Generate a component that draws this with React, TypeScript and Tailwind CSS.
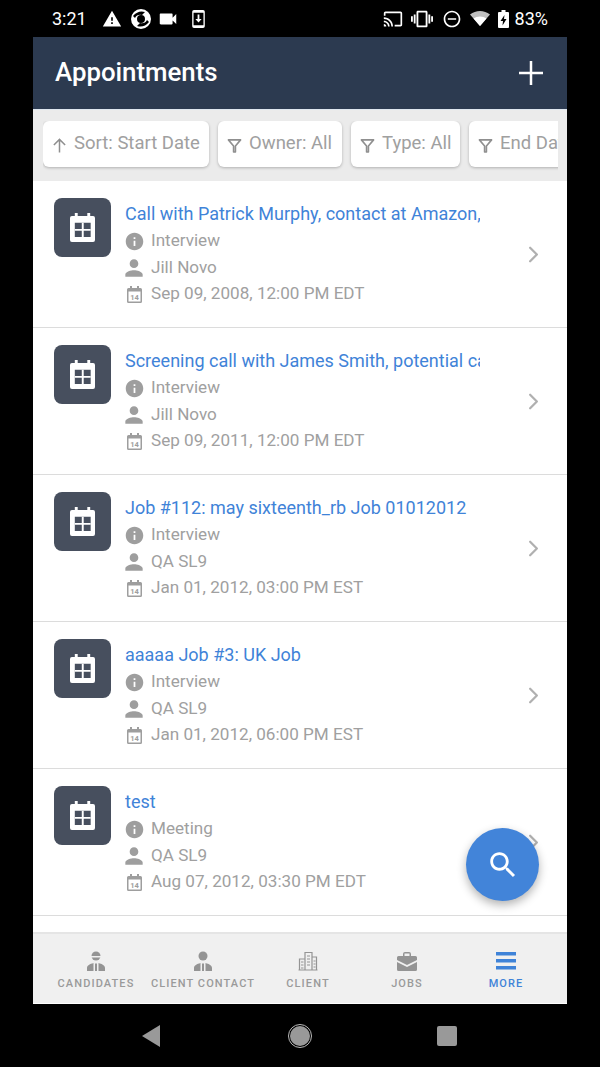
import { ChevronRight } from "lucide-react";
import type { ReactNode } from "react";

const appointments = [
  { title: "Call with Patrick Murphy, contact at Amazon, regarding new role", type: "Interview", owner: "Jill Novo", date: "Sep 09, 2008, 12:00 PM EDT" },
  { title: "Screening call with James Smith, potential candidate", type: "Interview", owner: "Jill Novo", date: "Sep 09, 2011, 12:00 PM EDT" },
  { title: "Job #112: may sixteenth_rb Job 01012012", type: "Interview", owner: "QA SL9", date: "Jan 01, 2012, 03:00 PM EST" },
  { title: "aaaaa Job #3: UK Job", type: "Interview", owner: "QA SL9", date: "Jan 01, 2012, 06:00 PM EST" },
  { title: "test", type: "Meeting", owner: "QA SL9", date: "Aug 07, 2012, 03:30 PM EDT" },
];

function Mi({ d, className }: { d: string; className: string }) {
  return (
    <svg viewBox="0 0 24 24" fill="currentColor" className={className}>
      <path d={d} />
    </svg>
  );
}

const paths = {
  warning: "M1 21h22L12 2 1 21zm12-3h-2v-2h2v2zm0-4h-2v-4h2v4z",
  video: "M17 10.5V7c0-.55-.45-1-1-1H4c-.55 0-1 .45-1 1v10c0 .55.45 1 1 1h12c.55 0 1-.45 1-1v-3.5l4 4v-11l-4 4z",
  cast: "M21 3H3c-1.1 0-2 .9-2 2v3h2V5h18v14h-7v2h7c1.1 0 2-.9 2-2V5c0-1.1-.9-2-2-2zM1 18v3h3c0-1.66-1.34-3-3-3zm0-4v2c2.76 0 5 2.24 5 5h2c0-3.87-3.13-7-7-7zm0-4v2c4.97 0 9 4.03 9 9h2c0-6.08-4.93-11-11-11z",
  vibrate: "M0 15h2V9H0v6zm3 2h2V7H3v10zm19-8v6h2V9h-2zm-3 8h2V7h-2v10zM16.5 3h-9C6.67 3 6 3.67 6 4.5v15c0 .83.67 1.5 1.5 1.5h9c.83 0 1.5-.67 1.5-1.5v-15c0-.83-.67-1.5-1.5-1.5zM16 19H8V5h8v14z",
  dnd: "M12 2C6.48 2 2 6.48 2 12s4.48 10 10 10 10-4.48 10-10S17.52 2 12 2zm0 18c-4.42 0-8-3.58-8-8s3.58-8 8-8 8 3.58 8 8-3.58 8-8 8zM7 11h10v2H7z",
  info: "M12 2C6.48 2 2 6.48 2 12s4.48 10 10 10 10-4.48 10-10S17.52 2 12 2zm1 15h-2v-6h2v6zm0-8h-2V7h2v2z",
  person: "M12 12c2.21 0 4-1.79 4-4s-1.79-4-4-4-4 1.79-4 4 1.79 4 4 4zm0 2c-2.67 0-8 1.34-8 4v2h16v-2c0-2.66-5.33-4-8-4z",
  search: "M15.5 14h-.79l-.28-.27C15.41 12.59 16 11.11 16 9.5 16 5.91 13.09 3 9.5 3S3 5.91 3 9.5 5.91 16 9.5 16c1.61 0 3.09-.59 4.23-1.57l.27.28v.79l5 4.99L20.49 19l-4.99-5zm-6 0C7.01 14 5 11.99 5 9.5S7.01 5 9.5 5 14 7.01 14 9.5 11.99 14 9.5 14z",
};

function SyncLogo() {
  return (
    <svg viewBox="0 0 20 20" className="h-5 w-5 text-white" fill="currentColor">
      <path fillRule="evenodd" d="M10 0a10 10 0 1 0 0 20 10 10 0 0 0 0-20zM10 6a4 4 0 1 1 0 8 4 4 0 0 1 0-8z" />
      <path d="M2 7 Q7 1 14 3 L11 6 Q6 5 4 9zM18 13 Q13 19 6 17 L9 14 Q14 15 16 11z" fill="#000" />
    </svg>
  );
}

function PhoneDownload() {
  return (
    <svg viewBox="0 0 14 20" className="h-[18px] w-[13px] text-white" fill="currentColor">
      <path fillRule="evenodd" d="M2 0h10a2 2 0 0 1 2 2v16a2 2 0 0 1-2 2H2a2 2 0 0 1-2-2V2a2 2 0 0 1 2-2zM1.500 3v14h11V3z" />
      <path d="M6 5h2v5h2.500L7 14 3.500 10H6z" />
    </svg>
  );
}

function Wifi() {
  return (
    <svg viewBox="0 0 20 15" className="h-[15px] w-5 text-white" fill="currentColor">
      <path d="M10 15 L0 3.500 C3 1.200 6.300 0 10 0 s7 1.200 10 3.500z" opacity="0.75" />
      <path d="M10 15 L3.500 7.500 C5.300 6.200 7.500 5.500 10 5.500 s4.700 .7 6.500 2z" />
    </svg>
  );
}

function Battery() {
  return (
    <svg viewBox="0 0 11 18" className="h-[18px] w-[11px] text-white" fill="currentColor">
      <path fillRule="evenodd" d="M3.500 0h4v2H10a1 1 0 0 1 1 1v14a1 1 0 0 1-1 1H1a1 1 0 0 1-1-1V3a1 1 0 0 1 1-1h2.500zM6.500 5 L2.500 11 H5 L4.500 15.500 L8.500 9 H6z" />
    </svg>
  );
}

function StatusBar() {
  return (
    <div className="flex h-[37px] items-center justify-between pl-[52px] pr-[52px] text-white">
      <div className="flex items-center">
        <span className="text-[18px] leading-none">3:21</span>
        <Mi d={paths.warning} className="ml-[15px] h-5 w-5" />
        <span className="ml-[9px]"><SyncLogo /></span>
        <Mi d={paths.video} className="ml-[6px] h-[22px] w-[22px]" />
        <span className="ml-[13px]"><PhoneDownload /></span>
      </div>
      <div className="flex items-center">
        <Mi d={paths.cast} className="h-[20px] w-[20px]" />
        <Mi d={paths.vibrate} className="ml-[8px] h-[22px] w-[22px]" />
        <Mi d={paths.dnd} className="ml-[9px] h-[20px] w-[20px]" />
        <span className="ml-[8px]"><Wifi /></span>
        <span className="ml-[8px]"><Battery /></span>
        <span className="ml-[6px] text-[18px] leading-none">83%</span>
      </div>
    </div>
  );
}

function FilterIcon() {
  return (
    <svg viewBox="0 0 16 16" className="mt-[2px] h-[15px] w-[15px] shrink-0 text-[#8f8f8f]" fill="none" stroke="currentColor" strokeWidth="1.700">
      <path d="M1.500 2h13L9 8.500V15H7V8.500z" strokeLinejoin="round" />
    </svg>
  );
}

function Chip({ width, icon, children }: { width: string; icon: ReactNode; children: ReactNode }) {
  return (
    <div className={`flex h-[46px] shrink-0 items-center gap-[7px] overflow-hidden rounded-md bg-white pl-[9px] text-[18.500px] whitespace-nowrap text-[#a0a0a0] shadow-[0_1px_3px_rgba(0,0,0,0.25)] ${width}`}>
      {icon}
      {children}
    </div>
  );
}

function CalendarTile() {
  return (
    <div className="flex h-[59px] w-[57px] shrink-0 items-center justify-center rounded-lg bg-[#474f5e]">
      <svg viewBox="0 0 26 30" className="h-[29px] w-[25px]">
        <path fill="#fff" fillRule="evenodd" d="M5 0h3v3h10V0h3v3h3a2 2 0 0 1 2 2v23a2 2 0 0 1-2 2H2a2 2 0 0 1-2-2V5a2 2 0 0 1 2-2h3zM5 10v15h16.500V10z" />
        <path fill="#fff" d="M12.250 10h2v15h-2zM5 16.500h16.500v2H5z" />
      </svg>
    </div>
  );
}

function DateIcon() {
  return (
    <svg viewBox="0 0 15 17" className="h-[17px] w-[15px] text-[#9e9e9e]">
      <path fill="currentColor" fillRule="evenodd" d="M3 0h2v2h5V0h2v2h1.500A1.500 1.500 0 0 1 15 3.500v12a1.500 1.500 0 0 1-1.500 1.500h-12A1.500 1.500 0 0 1 0 15.500v-12A1.500 1.500 0 0 1 1.500 2H3zM1.500 5.500v10h12v-10z" />
      <text x="7.500" y="14" textAnchor="middle" fontSize="7.500" fontWeight="700" fill="currentColor">14</text>
    </svg>
  );
}

function Row({ icon, text }: { icon: ReactNode; text: string }) {
  return (
    <div className="flex h-[26.500px] items-center">
      <span className="flex w-[18px] justify-center">{icon}</span>
      <span className="ml-[8px] text-[17.100px] whitespace-nowrap text-[#a0a0a0]">{text}</span>
    </div>
  );
}

function AppointmentRow({ a }: { a: (typeof appointments)[number] }) {
  return (
    <div className="flex h-[147px] shrink-0 border-b border-[#dcdcdc] pl-[21px] pt-[17px]">
      <CalendarTile />
      <div className="ml-[14px] w-[355px] pt-[3px]">
        <div className="h-[27px] overflow-hidden text-[18px] leading-[26px] whitespace-nowrap text-[#3f83d8]">{a.title}</div>
        <Row icon={<Mi d={paths.info} className="h-[21px] w-[21px] max-w-none shrink-0 text-[#9e9e9e]" />} text={a.type} />
        <Row icon={<Mi d={paths.person} className="h-[26px] w-[26px] max-w-none shrink-0 text-[#9e9e9e]" />} text={a.owner} />
        <Row icon={<DateIcon />} text={a.date} />
      </div>
      <div className="ml-[40px] flex h-[113px] items-center">
        <ChevronRight size={27} strokeWidth={2} className="text-[#b0b0b0]" />
      </div>
    </div>
  );
}

function BriefcaseIcon() {
  return (
    <svg viewBox="0 0 20 19" className="h-[19px] w-5" fill="currentColor">
      <path d="M6 4V2a2 2 0 0 1 2-2h4a2 2 0 0 1 2 2v2h4.500A1.500 1.500 0 0 1 20 5.500V8l-10 5L0 8V5.500A1.500 1.500 0 0 1 1.500 4zM7.500 4h5V1.500h-5z" fillRule="evenodd" />
      <path d="M0 10l10 5 10-5v7.500a1.500 1.500 0 0 1-1.500 1.500h-17A1.500 1.500 0 0 1 0 17.500z" />
    </svg>
  );
}

function AgentIcon({ cap }: { cap?: boolean }) {
  return (
    <svg viewBox="0 0 20 20" className="h-5 w-5" fill="currentColor">
      <circle cx="10" cy="5" r="4.500" />
      {cap && <path d="M4 5h12v1.500H4z" fill="#f0f0f0" />}
      <path d="M1 20v-3c0-2.500 3-4 6.500-5v8zM9 12.500h2V20H9zM12.500 12c3.500 1 6.500 2.500 6.500 5v3h-6.500z" />
    </svg>
  );
}

function ClientIcon() {
  return (
    <svg viewBox="0 0 20 20" className="h-5 w-5" fill="none" stroke="currentColor" strokeWidth="1.200">
      <path d="M7 19V1.500h7V19M14 6h4.500v13M7 8H1.500v11M0.500 19h19M9 5h3M9 8h3M9 11h3M9 14h3M3 11h2.500M3 14h2.500M3 17h2.500M15.500 10h2M15.500 13h2M15.500 16h2" />
    </svg>
  );
}

const tabs = [
  { label: "CANDIDATES", icon: <AgentIcon cap /> },
  { label: "CLIENT CONTACT", icon: <AgentIcon /> },
  { label: "CLIENT", icon: <ClientIcon /> },
  { label: "JOBS", icon: <BriefcaseIcon /> },
  { label: "MORE", active: true, icon: (
    <svg viewBox="0 0 20 18" className="h-[18px] w-5" fill="currentColor">
      <path d="M0 0h20v3.500H0zM0 7h20v3.500H0zM0 14h20v3.500H0z" />
    </svg>
  ) },
];

export default function App() {
  return (
    <div className="flex h-[1067px] w-[600px] flex-col overflow-hidden bg-black font-['Roboto',sans-serif]">
      <StatusBar />

      <div className="relative mx-[33px] flex h-[967px] flex-col overflow-hidden bg-white">
        {/* header */}
        <div className="flex h-[72px] shrink-0 items-center justify-between bg-[#2c3a50] pb-[1px] pl-[22px] pr-[24px] text-white">
          <h1 className="text-[25.800px] font-medium">Appointments</h1>
          <svg viewBox="0 0 24 24" className="h-[24px] w-[24px]" fill="currentColor">
            <path d="M10.750 0h2.500v10.750H24v2.500H13.250V24h-2.500V13.250H0v-2.500h10.750z" />
          </svg>
        </div>

        {/* filters */}
        <div className="flex h-[72px] shrink-0 border-t border-[#dfe6ef] bg-[#ebebeb] pl-[10px] pr-[9px] pt-[11px]">
          <div className="flex gap-[9px] overflow-hidden">
            <Chip width="w-[166px]" icon={
              <svg viewBox="0 0 16 16" className="mt-[2px] h-[16px] w-[15px] shrink-0 text-[#8f8f8f]" fill="none" stroke="currentColor" strokeWidth="1.600">
                <path d="M8 16V2M2 8l6-6 6 6" />
              </svg>
            }>Sort: Start Date</Chip>
            <Chip width="w-[124px]" icon={<FilterIcon />}>Owner: All</Chip>
            <Chip width="w-[109px]" icon={<FilterIcon />}>Type: All</Chip>
            <Chip width="w-[110px]" icon={<FilterIcon />}>End Date</Chip>
          </div>
        </div>

        {/* list */}
        <div className="flex min-h-0 flex-1 flex-col overflow-hidden">
          {appointments.map((a) => (
            <AppointmentRow key={a.title} a={a} />
          ))}
        </div>

        {/* bottom nav */}
        <div className="grid h-[72px] shrink-0 grid-cols-[98px_116px_94px_104px_94px] border-t-2 border-b border-t-[#e5e5e5] border-b-white bg-[#f0f0f0] pl-[14px] pt-[17px]">
          {tabs.map((t) => (
            <div key={t.label} className={`flex flex-col items-center ${t.active ? "text-[#3f83d8]" : "text-[#949494]"}`}>
              <div className="flex h-5 items-center">{t.icon}</div>
              <span className={`mt-[6px] text-[11px] leading-[14px] font-medium tracking-[1.100px] whitespace-nowrap ${t.active ? "text-[#3f83d8]" : "text-[#9a9a9a]"}`}>{t.label}</span>
            </div>
          ))}
        </div>

        {/* search fab */}
        <div className="absolute left-[433px] top-[791px] flex h-[73px] w-[73px] items-center justify-center rounded-full bg-[#4284d9] shadow-[0_4px_10px_rgba(0,0,0,0.3)]">
          <Mi d={paths.search} className="h-[34px] w-[34px] text-white" />
        </div>
      </div>

      {/* android nav */}
      <div className="flex h-[63px] items-center pl-[142px]">
        <svg viewBox="0 0 18 22" className="h-[22px] w-[18px] text-[#999]" fill="currentColor">
          <path d="M18 0v22L0 11z" />
        </svg>
        <div className="ml-[128px] flex h-[24px] w-[24px] items-center justify-center rounded-full border border-[#bbb]">
          <div className="h-[20px] w-[20px] rounded-full bg-[#999]" />
        </div>
        <div className="ml-[125px] h-[20px] w-[20px] rounded-[2px] bg-[#999]" />
      </div>
    </div>
  );
}
